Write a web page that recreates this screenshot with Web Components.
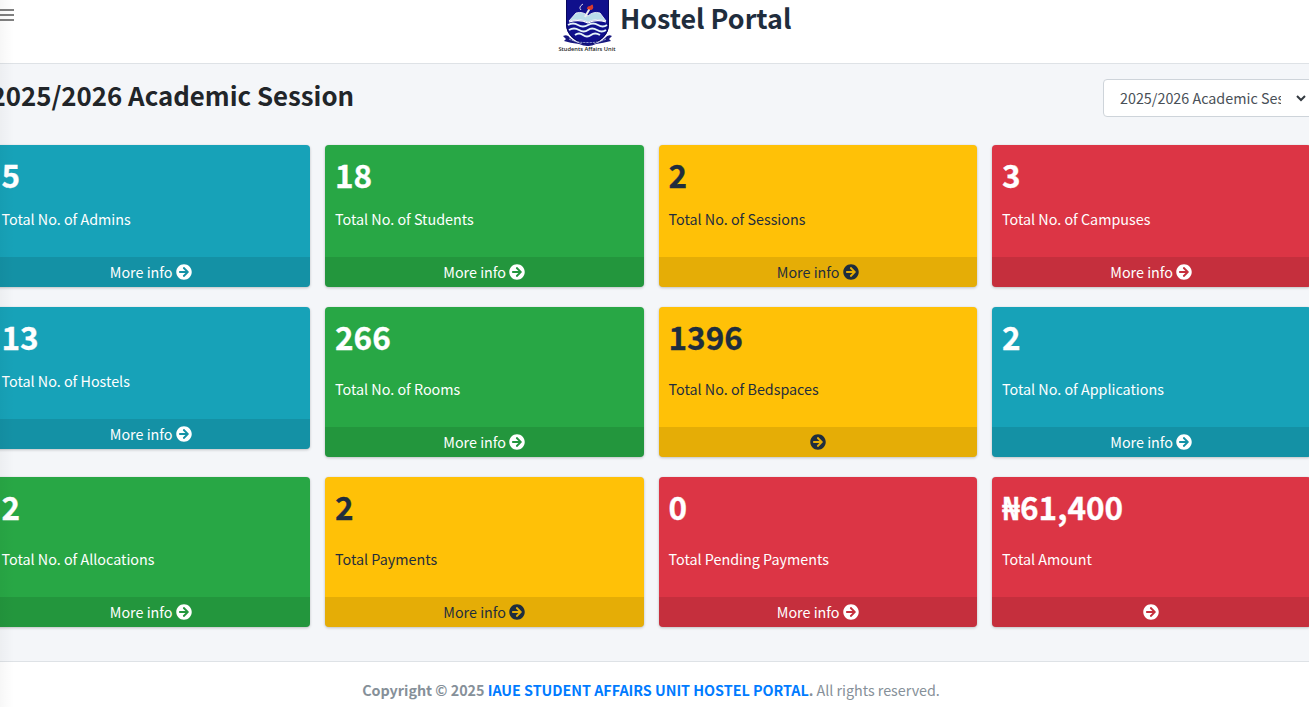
<!DOCTYPE html>
<html lang="en">
<head>
<meta charset="utf-8">
<title>Hostel Portal</title>
<style>
html,body{margin:0;height:100%;overflow:hidden;background:#f4f6f9}
body{font-family:"Noto Sans CJK JP","Noto Sans",sans-serif;font-size:14.33px;line-height:24px;color:#212529}
</style>
</head>
<body>
<hostel-app></hostel-app>
<script>
const define = (name, html, setup) => customElements.define(name, class extends HTMLElement {
  constructor() {
    super();
    const t = document.createElement('template');
    t.innerHTML = html;
    this.attachShadow({mode: 'open'}).appendChild(t.content.cloneNode(true));
  }
  connectedCallback() { if (setup) setup(this, this.shadowRoot); }
});

define('arrow-icon', `
<style>:host{display:inline-block;width:16px;height:16px;vertical-align:-2px}svg{display:block}</style>
<svg width="16" height="16" viewBox="0 0 512 512" fill="currentColor"><path d="M256 8c137 0 248 111 248 248S393 504 256 504 8 393 8 256 119 8 256 8zm-28.900 143.600l75.500 72.400H120c-13.300 0-24 10.700-24 24v16c0 13.300 10.700 24 24 24h182.600l-75.500 72.400c-9.700 9.300-9.900 24.800-.4 34.300l11 10.900c9.400 9.400 24.600 9.400 33.900 0L404.300 273c9.400-9.400 9.400-24.600 0-33.900L271.600 106.300c-9.400-9.400-24.600-9.400-33.900 0l-11 10.900c-9.500 9.600-9.300 25.100.4 34.400z"/></svg>`);

define('portal-logo', `
<style>:host{display:block;width:58px;height:54px}svg{display:block}text{font:600 5.6px "Open Sans","DejaVu Sans",sans-serif}</style>
<svg width="58" height="54" viewBox="0 0 58 54">
<path d="M8 0H51V24C51 35 43 42 30 46C17 42 8 35 8 24Z" fill="#10108c"/>
<path d="M8.500 0V24C8.500 35 17 41 30 45C43 41 50.500 35 50.500 24V0" fill="none" stroke="#07075c"/>
<path d="M11 21L18 13Q25 11 30 16Q35 11 42 13L48 21Q37 18 30 22Q22 18 11 21Z" fill="#b9dcea" stroke="#fff" stroke-width=".8"/>
<path d="M27 17L32 8" stroke="#eee" stroke-width="2"/>
<path d="M29 9Q29 6 32 6Q35 3 35 6Q36 9 33 10Z" fill="#d83b2c"/>
<path d="M25 4Q20 7 23 10" fill="none" stroke="#d9d9f0"/>
<path d="M11 22Q22 19 30 23Q38 19 48 22" fill="none" stroke="#fff" stroke-width="1.200"/>
<g fill="none" stroke="#e4f5fa" stroke-width="1.900"><path d="M10 25Q15 22 20 25T30 25T40 25T49 25"/><path d="M11 30Q16 27 21 30T30 30T39 30T48 30"/><path d="M17 35Q21 32 25 35T33 35T42 35"/></g>
<path d="M5 36Q10 34 12 38Q20 45 30 44Q40 45 47 38Q50 34 54 36L51 39L53 41Q45 43 38 44Q34 46 30 46Q25 46 21 44Q12 43 6 41L8 39Z" fill="#17177e"/>
<path d="M11 39Q19 43 30 42.500Q41 43 48 39" fill="none" stroke="#a7b2dd" stroke-width="1" stroke-dasharray="2 1"/>
<text x="0.500" y="51" textLength="57" lengthAdjust="spacingAndGlyphs" fill="#222">Students Affairs Unit</text>
</svg>`);

define('portal-header', `
<style>:host{display:block;height:63px;background:#fff;border-bottom:1px solid #dee2e6}
.bar{display:grid;grid-template-columns:558px auto 1fr;height:54px}
.menu{display:block;margin-top:9px}
h1{margin:0 0 0 4px;font-size:26.85px;line-height:36px;font-weight:700;color:#1f2d3d;white-space:nowrap}</style>
<div class="bar"><svg class="menu" width="14" height="13" fill="#808080"><path d="M0 0h14v2H0zM0 5h14v2H0zM0 10h14v2H0z"/></svg>
<portal-logo></portal-logo><h1>Hostel Portal</h1></div>`);

define('session-select', `
<style>:host{display:flex;box-sizing:border-box;width:212px;height:38px;flex:none;align-items:center;background:#fff;border:1px solid #ced4da;border-radius:4px;padding-left:16px;color:#495057}
.value{width:161px;overflow:hidden;white-space:nowrap}svg{margin-left:15px}</style>
<div class="value"><slot></slot></div><svg width="10" height="7" fill="none" stroke="#343a40" stroke-width="2"><path d="M1 1L5 5L9 1"/></svg>`);

define('stat-card', `
<style>:host{display:flex;flex-direction:column;height:150px;border-radius:4px;overflow:hidden;background:var(--bg);color:#fff;box-shadow:0 0 1px rgba(0,0,0,.125),0 1px 3px rgba(0,0,0,.2)}
:host([tone=info]){--bg:#17a2b8}:host([tone=success]){--bg:#28a745}:host([tone=danger]){--bg:#dc3545}
:host([tone=warning]){--bg:#ffc107;color:#1f2d3d}
:host([compact]){height:142px}
.inner{flex:1;padding:10px}
h3{margin:0;font-size:31.5px;line-height:38px;height:60px;font-weight:700;white-space:nowrap;-webkit-text-stroke:.3px currentColor}
:host([compact]) h3{height:52px}
p{margin:0}
.more{height:30px;line-height:30px;text-align:center;background:rgba(0,0,0,.1);color:inherit}
</style>
<div class="inner"><h3></h3><p></p></div><div class="more"></div>`, (el, root) => {
  root.querySelector('h3').textContent = el.getAttribute('value');
  root.querySelector('p').textContent = el.getAttribute('label');
  root.querySelector('.more').innerHTML = (el.hasAttribute('icon-only') ? '' : 'More info ') + '<arrow-icon></arrow-icon>';
});

define('portal-footer', `
<style>:host{display:block;box-sizing:border-box;height:46px;flex:none;background:#fff;border-top:1px solid #dee2e6;color:#869099;text-align:center;white-space:nowrap;padding-top:16px;padding-right:7px;letter-spacing:-.02px}
a{color:#007bff}b{font-weight:700}</style><b>Copyright © 2025 <a>IAUE STUDENT AFFAIRS UNIT HOSTEL PORTAL</a>.</b> All rights reserved.`);

define('hostel-app', `
<style>:host{display:flex;flex-direction:column;position:relative;width:100vw;height:707px;overflow:hidden}
.top{display:flex;justify-content:space-between;height:66px;padding-top:15px;margin-right:-6px}
h2{margin:0 0 0 -9.500px;font-size:25.8px;line-height:32px;font-weight:700;white-space:nowrap}
main{flex:1}
.grid{display:grid;grid-template-columns:repeat(4,318.500px);column-gap:15px;row-gap:20px;align-items:start;margin-left:-8.500px}
.shade{position:absolute;left:0;top:0;width:14px;height:707px;background:linear-gradient(90deg,rgba(0,0,0,.03),transparent)}</style>
<portal-header></portal-header>
<main><div class="top"><h2>2025/2026 Academic Session</h2><session-select>2025/2026 Academic Session</session-select></div>
<div class="grid">
<stat-card tone="info" compact value="5" label="Total No. of Admins"></stat-card>
<stat-card tone="success" compact value="18" label="Total No. of Students"></stat-card>
<stat-card tone="warning" compact value="2" label="Total No. of Sessions"></stat-card>
<stat-card tone="danger" compact value="3" label="Total No. of Campuses"></stat-card>
<stat-card tone="info" compact value="13" label="Total No. of Hostels"></stat-card>
<stat-card tone="success" value="266" label="Total No. of Rooms"></stat-card>
<stat-card tone="warning" icon-only value="1396" label="Total No. of Bedspaces"></stat-card>
<stat-card tone="info" value="2" label="Total No. of Applications"></stat-card>
<stat-card tone="success" value="2" label="Total No. of Allocations"></stat-card>
<stat-card tone="warning" value="2" label="Total Payments"></stat-card>
<stat-card tone="danger" value="0" label="Total Pending Payments"></stat-card>
<stat-card tone="danger" icon-only value="₦61,400" label="Total Amount"></stat-card>
</div></main>
<portal-footer></portal-footer><div class="shade"></div>`);
</script>
</body>
</html>
